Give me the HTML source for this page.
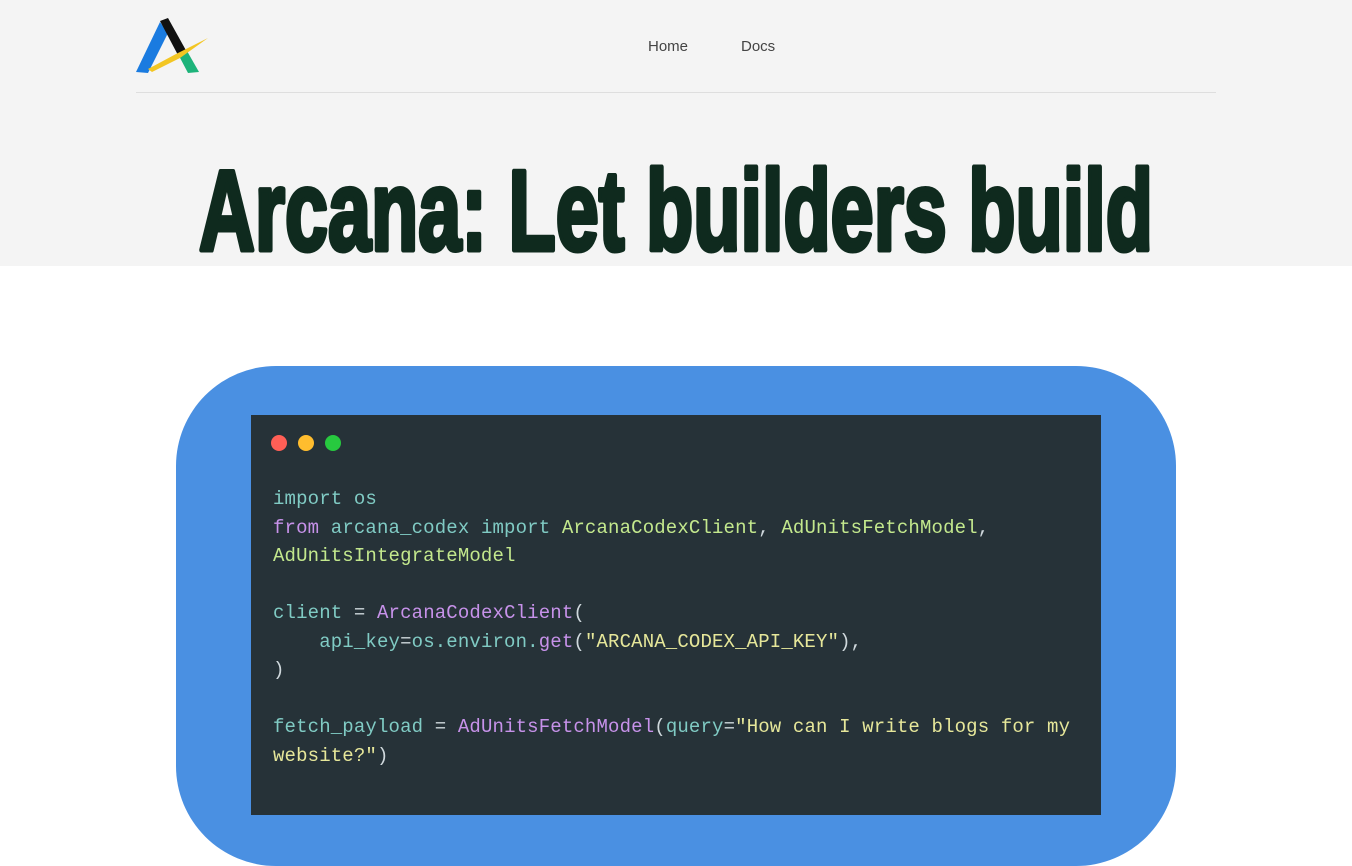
<!DOCTYPE html>
<html style="overflow:hidden"><head><meta charset="utf-8"><style>
html,body{margin:0;width:1352px;height:760px;overflow:hidden;background:#fff;font-family:"Liberation Sans",sans-serif}
.top{position:absolute;left:0;top:0;width:1352px;height:266px;background:#f4f4f4}
.line{position:absolute;left:136px;top:92px;width:1080px;height:1px;background:#dedede}
.nav{position:absolute;top:38px;font-size:15px;color:#444}
.blue{position:absolute;left:176px;top:366px;width:1000px;height:500px;background:#4a90e2;border-radius:100px}
.code{position:absolute;left:251px;top:415px;width:850px;height:400px;background:#263238}
.dot{position:absolute;top:435px;width:16px;height:16px;border-radius:50%}
pre{position:absolute;left:273px;top:485px;margin:0;font-family:"Liberation Mono",monospace;font-size:19px;letter-spacing:0.15px;line-height:28.5px;color:#80cbc4}
.k{color:#80cbc4}.m{color:#c792ea}.c{color:#c3e88d}.f{color:#c792ea}.s{color:#e6e79a}.p{color:#cfd8dc}
</style></head><body>
<div class="top"></div>
<svg style="position:absolute;left:134px;top:16px" width="80" height="62" viewBox="0 0 80 62">
<polygon points="2,56 26,6 34,17 14,57" fill="#1a7be0"/>
<polygon points="26,5 34,2 54,38 45,41" fill="#111"/>
<polygon points="44,38 53,35 65,56 54,57" fill="#1db37a"/>
<polygon points="14,53 42,38 74,22 46,42 18,56" fill="#f3c623"/>
</svg>
<div class="nav" style="left:648px">Home</div>
<div class="nav" style="left:741px">Docs</div>
<div class="line"></div>
<svg style="position:absolute;left:0;top:140px" width="1352" height="126"><text x="199" y="110" textLength="954" lengthAdjust="spacingAndGlyphs" font-family="Liberation Sans" font-weight="bold" font-size="114" fill="#0f2a1e" stroke="#0f2a1e" stroke-width="5" stroke-linejoin="round">Arcana: Let builders build</text></svg>
<div class="blue"></div>
<div class="code"></div>
<div class="dot" style="left:271px;background:#ff5f56"></div>
<div class="dot" style="left:298px;background:#ffbd2e"></div>
<div class="dot" style="left:325px;background:#27c93f"></div>
<pre><span class="k">import</span> os
<span class="m">from</span> arcana_codex <span class="k">import</span> <span class="c">ArcanaCodexClient</span><span class="p">,</span> <span class="c">AdUnitsFetchModel</span><span class="p">,</span>
<span class="c">AdUnitsIntegrateModel</span>

client <span class="p">=</span> <span class="f">ArcanaCodexClient</span><span class="p">(</span>
    api_key<span class="p">=</span>os.environ.<span class="f">get</span><span class="p">(</span><span class="s">"ARCANA_CODEX_API_KEY"</span><span class="p">),</span>
<span class="p">)</span>

fetch_payload <span class="p">=</span> <span class="f">AdUnitsFetchModel</span><span class="p">(</span>query<span class="p">=</span><span class="s">"How can I write blogs for my</span>
<span class="s">website?"</span><span class="p">)</span></pre>
</body></html>
